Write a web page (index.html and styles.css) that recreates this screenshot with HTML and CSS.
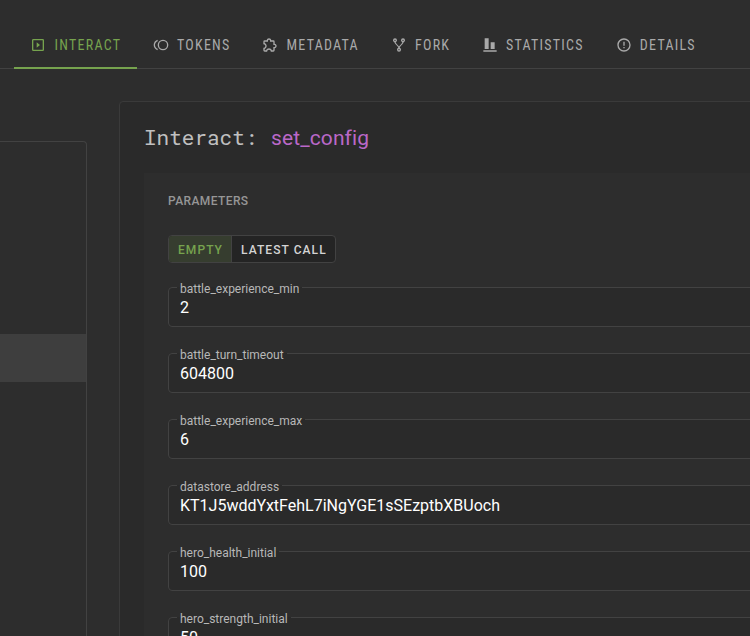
FILE: index.html
```html
<!DOCTYPE html>
<html lang="en">
<head>
<meta charset="utf-8">
<title>Interact</title>
<link rel="stylesheet" href="styles.css">
</head>
<body>
<nav class="tabs">
  <a class="tab tab-interact active"><svg viewBox="0 0 24 24"><path d="M19,19H5V5H19M19,3H5A2,2 0 0,0 3,5V19A2,2 0 0,0 5,21H19A2,2 0 0,0 21,19V5A2,2 0 0,0 19,3M10,8V16L15,12L10,8Z"/></svg><span>INTERACT</span></a>
  <a class="tab tab-tokens"><svg viewBox="0 0 24 24"><path d="M15,4A8,8 0 0,1 23,12A8,8 0 0,1 15,20A8,8 0 0,1 7,12A8,8 0 0,1 15,4M15,18A6,6 0 0,0 21,12A6,6 0 0,0 15,6A6,6 0 0,0 9,12A6,6 0 0,0 15,18M3,12C3,14.61 4.67,16.83 7,17.65V19.74C3.55,18.85 1,15.73 1,12C1,8.27 3.55,5.15 7,4.26V6.35C4.67,7.17 3,9.39 3,12Z"/></svg><span>TOKENS</span></a>
  <a class="tab tab-metadata"><svg viewBox="0 0 24 24"><path d="M22,13.5C22,15.26 20.7,16.72 19,16.96V20A2,2 0 0,1 17,22H13.2V21.7A2.7,2.7 0 0,0 10.5,19C9,19 7.8,20.21 7.8,21.7V22H4A2,2 0 0,1 2,20V16.2H2.3C3.79,16.2 5,15 5,13.5C5,12 3.79,10.8 2.3,10.8H2V7A2,2 0 0,1 4,5H7.04C7.28,3.3 8.74,2 10.5,2C12.26,2 13.72,3.3 13.96,5H17A2,2 0 0,1 19,7V10.04C20.7,10.28 22,11.74 22,13.5M17,15H18.5A1.5,1.5 0 0,0 20,13.5A1.5,1.5 0 0,0 18.5,12H17V7H12V5.5A1.5,1.5 0 0,0 10.5,4A1.5,1.5 0 0,0 9,5.5V7H4V9.12C5.76,9.8 7,11.5 7,13.5C7,15.5 5.75,17.2 4,17.88V20H6.12C6.8,18.25 8.5,17 10.5,17C12.5,17 14.2,18.25 14.88,20H17V15Z"/></svg><span>METADATA</span></a>
  <a class="tab tab-fork"><svg viewBox="0 0 24 24"><path d="M6,2A3,3 0 0,1 9,5C9,6.28 8.19,7.38 7.06,7.81C7.15,8.27 7.39,8.83 8,9.63C9,10.92 11,12.83 12,14.17C13,12.83 15,10.92 16,9.63C16.61,8.83 16.85,8.27 16.94,7.81C15.81,7.38 15,6.28 15,5A3,3 0 0,1 18,2A3,3 0 0,1 21,5C21,6.32 20.14,7.45 18.95,7.85C18.87,8.37 18.64,9 18,9.83C17,11.17 15,13.08 14,14.38C13.39,15.17 13.15,15.73 13.06,16.19C14.19,16.62 15,17.72 15,19A3,3 0 0,1 12,22A3,3 0 0,1 9,19C9,17.72 9.81,16.62 10.94,16.19C10.85,15.73 10.61,15.17 10,14.38C9,13.08 7,11.17 6,9.83C5.36,9 5.13,8.37 5.05,7.85C3.86,7.45 3,6.32 3,5A3,3 0 0,1 6,2M6,4A1,1 0 0,0 5,5A1,1 0 0,0 6,6A1,1 0 0,0 7,5A1,1 0 0,0 6,4M18,4A1,1 0 0,0 17,5A1,1 0 0,0 18,6A1,1 0 0,0 19,5A1,1 0 0,0 18,4M12,18A1,1 0 0,0 11,19A1,1 0 0,0 12,20A1,1 0 0,0 13,19A1,1 0 0,0 12,18Z"/></svg><span>FORK</span></a>
  <a class="tab tab-statistics"><svg viewBox="0 0 24 24"><path d="M22,22H2V20H22V22M10,2H4V18H10V2M19,8H13V18H19V8Z"/></svg><span>STATISTICS</span></a>
  <a class="tab tab-details"><svg viewBox="0 0 24 24"><path d="M11,15H13V17H11V15M11,7H13V13H11V7M12,2C6.47,2 2,6.5 2,12A10,10 0 0,0 12,22A10,10 0 0,0 22,12A10,10 0 0,0 12,2M12,20A8,8 0 0,1 4,12A8,8 0 0,1 12,4A8,8 0 0,1 20,12A8,8 0 0,1 12,20Z"/></svg><span>DETAILS</span></a>
</nav>
<main class="layout">
  <aside class="methods"><div class="method selected"></div></aside>
  <section class="card">
    <h1 class="title"><span class="title-label">Interact:</span><span class="method-name">set_config</span></h1>
    <div class="panel">
      <h2 class="caption">PARAMETERS</h2>
      <div class="toggle"><button class="toggle-item on">EMPTY</button><button class="toggle-item">LATEST CALL</button></div>
      <fieldset class="field"><legend>battle_experience_min</legend><div class="value">2</div></fieldset>
      <fieldset class="field"><legend>battle_turn_timeout</legend><div class="value">604800</div></fieldset>
      <fieldset class="field"><legend>battle_experience_max</legend><div class="value">6</div></fieldset>
      <fieldset class="field"><legend>datastore_address</legend><div class="value">KT1J5wddYxtFehL7iNgYGE1sSEzptbXBUoch</div></fieldset>
      <fieldset class="field"><legend>hero_health_initial</legend><div class="value">100</div></fieldset>
      <fieldset class="field"><legend>hero_strength_initial</legend><div class="value">50</div></fieldset>
    </div>
  </section>
</main>
</body>
</html>
```
FILE: styles.css
```css
* { box-sizing: border-box; }
html, body { height: 100%; }
body {
  margin: 0;
  overflow: hidden;
  background: #2d2d2d;
  color: #fff;
  font-family: Roboto, sans-serif;
}
.tabs {
  display: flex;
  height: 69px;
  padding: 21px 0 0 14px;
  border-bottom: 1px solid #424242;
}
.tab {
  display: flex;
  flex: none;
  align-items: center;
  height: 48px;
  padding: 2px 0 0 16px;
  border-bottom: 2px solid transparent;
  color: #a9a9a9;
  font-family: "Roboto Condensed", Roboto, sans-serif;
  font-stretch: 75%;
  font-size: 14px;
  letter-spacing: 1.25px;
  white-space: nowrap;
}
.tab svg { flex: none; width: 16px; height: 16px; margin-right: 8px; fill: currentColor; }
.tab.active { color: #76a34e; border-bottom-color: #76a34e; }
.tab-interact { width: 123px; }
.tab-tokens { width: 109px; }
.tab-metadata { width: 129px; }
.tab-interact svg, .tab-metadata svg { margin-right: 8.5px; }
.tab-fork { width: 91px; }
.tab-statistics { width: 134px; }
.tab-details { width: 112px; padding-left: 15.8px; }
.layout { display: flex; align-items: flex-start; height: 567px; padding-top: 32px; overflow: hidden; }
.methods {
  flex: none;
  width: 87px;
  height: 600px;
  margin: 40px 32px 0 0;
  padding-top: 192px;
  border: 1px solid #424242;
  border-left: 0;
  border-radius: 0 4px 4px 0;
}
.method.selected { height: 48px; background: #3e3e3e; }
.card {
  flex: none;
  width: 660px;
  height: 620px;
  padding: 0 0 0 24px;
  border: 1px solid #3a3a3a;
  border-radius: 4px;
  background: #2a2a2a;
}
.title {
  display: flex;
  align-items: baseline;
  height: 71px;
  margin: 0;
  padding-top: 20px;
  font-weight: 400;
  font-size: 21px;
  line-height: 30px;
}
.title-label { width: 127px; color: #c0c0c0; font-family: "Roboto Mono", "Liberation Mono", monospace; }
.method-name { color: #ba68c8; letter-spacing: 0.1px; }
.panel { height: 560px; padding: 20px 0 0 24px; background: #2d2d2d; }
.caption { margin: 0 0 26px; color: #969696; font-size: 12px; line-height: 16px; font-weight: 500; letter-spacing: 0.4px; }
.toggle {
  display: flex;
  width: 168px;
  height: 28px;
  margin-bottom: 18px;
  overflow: hidden;
  border: 1px solid #424242;
  border-radius: 4px;
  background: #242424;
}
.toggle-item {
  padding: 1px 0 0 9px;
  border: 0;
  background: transparent;
  color: #d4d4d4;
  font: 500 12px/26px Roboto, sans-serif;
  letter-spacing: 1.07px;
  text-align: left;
  white-space: nowrap;
}
.toggle-item.on { width: 63px; border-right: 1px solid #424242; background: #363d2f; color: #76a34e; }
.field {
  height: 46px;
  min-width: 0;
  margin: 0 0 20px;
  padding: 0 0 0 8px;
  border: 1px solid #424242;
  border-radius: 4px;
  background: #2a2a2a;
}
.field legend { height: 12px; padding: 0 3px; color: #b8b8b8; font-size: 12px; line-height: 16px; }
.value { padding: 5px 0 0 3px; font-size: 16px; line-height: 20px; }
```
